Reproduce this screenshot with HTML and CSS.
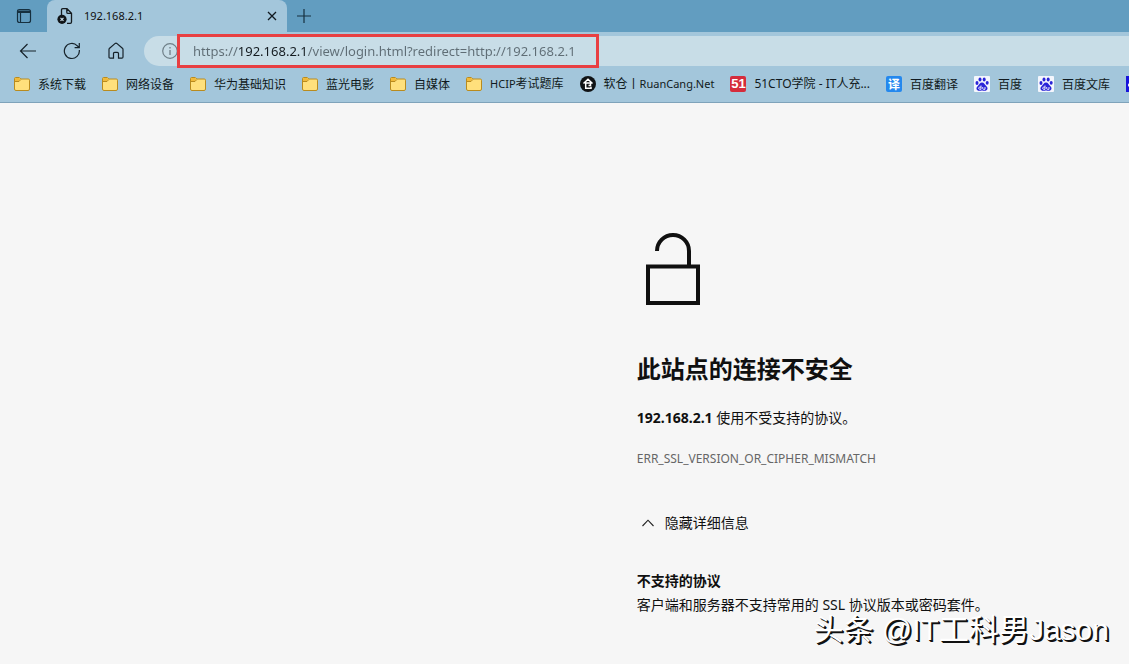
FILE: index.html
```html
<!DOCTYPE html>
<html lang="zh-CN">
<head>
<meta charset="utf-8">
<meta name="viewport" content="width=device-width, initial-scale=1">
<title>192.168.2.1</title>
<link rel="stylesheet" href="styles.css">
</head>
<body>
<svg class="defs" aria-hidden="true">
  <symbol id="folder" viewBox="0 0 16 16">
    <path d="M.5 13V2.700Q.5 1.500 1.700 1.500H5.300L6.800 3H14.300Q15.500 3 15.500 4.200V13Q15.500 14.500 14 14.500H2Q.5 14.500.5 13Z" fill="#ffe07c" stroke="#b98b1e"/>
    <path d="M1 2.500Q1 2 1.700 2H5.200L6.500 3.300 5 5H1Z" fill="#f0b93a"/>
    <path d="M1 5.500H5L6.800 3.500" fill="none" stroke="#b98b1e"/>
  </symbol>
  <symbol id="paw" viewBox="0 0 16 16">
    <rect width="16" height="16" rx="1" fill="#f4f6fd"/>
    <g fill="#2a24d8">
      <ellipse cx="3" cy="7" rx="1.500" ry="1.900"/>
      <ellipse cx="6" cy="3.600" rx="1.500" ry="2"/>
      <ellipse cx="10.200" cy="3.600" rx="1.500" ry="2"/>
      <ellipse cx="13.200" cy="6.800" rx="1.500" ry="1.900"/>
      <path d="M8 6.600C10.200 6.600 10.700 8.600 12 9.700 14.800 12 13.300 14.800 10.900 14.800 9.500 14.800 8.700 14.500 8 14.500S6.500 14.800 5.100 14.800C2.700 14.800 1.200 12 4 9.700 5.300 8.600 5.800 6.600 8 6.600Z"/>
    </g>
    <path d="M7 9.500V13.300H5.700Q4.700 13.300 4.700 12.200T5.700 11.100H7M8.700 11V12.500Q8.700 13.300 9.500 13.300H11V11" fill="none" stroke="#fff" stroke-width=".9"/>
  </symbol>
</svg>
<header class="browser">
  <div class="tabstrip">
    <button class="tab-actions" aria-label="标签页操作">
      <svg class="icon" viewBox="0 0 16 16"><path d="M1.500 4.500V3.500Q1.500 1.500 3.500 1.500H12.500Q14.500 1.500 14.500 3.500V4.500ZM1.500 4V12.500Q1.500 14.500 3.500 14.500H12.500Q14.500 14.500 14.500 12.500V4M4.500 4.500V14.500" fill="none" stroke="#16303f" stroke-width="1.200"/><path d="M2 2.500H14V4.500H2Z" fill="#16303f"/></svg>
    </button>
    <div class="tab">
      <svg class="icon" viewBox="0 0 16 16"><path d="M4.500 7V2Q4.500.7 5.800.7H10L14.500 5.200V14Q14.500 15.300 13.200 15.300H10M9.800 1V4.200Q9.800 5.400 11 5.400H14.200" fill="none" stroke="#151b1f" stroke-width="1.300"/><circle cx="5" cy="11.300" r="4.600" fill="#101417"/><path d="M3.500 9.800 6.500 12.800M6.500 9.800 3.500 12.800" stroke="#c6dae5" stroke-width="1.200"/></svg>
      <span class="tab-title">192.168.2.1</span>
      <button class="close" aria-label="关闭标签页"><svg viewBox="0 0 10 10"><path d="M1 1 9 9M9 1 1 9" stroke="#111a20" stroke-width="1.300"/></svg></button>
    </div>
    <button class="new-tab" aria-label="新建标签页"><svg viewBox="0 0 14 14"><path d="M7 0V14M0 7H14" stroke="#16303f" stroke-width="1.200"/></svg></button>
  </div>
  <div class="toolbar">
    <button class="nav" aria-label="返回"><svg viewBox="0 0 18 18"><path d="M17 9H1.800M8.500 2 1.500 9 8.500 16" fill="none" stroke="#16222a" stroke-width="1.200"/></svg></button>
    <button class="nav" aria-label="刷新"><svg viewBox="0 0 18 18"><path d="M16.300 8A7.500 7.500 0 1 1 14.300 3.800L16.200 5.600M16.300 1V5.700H11.600" fill="none" stroke="#16222a" stroke-width="1.200"/></svg></button>
    <button class="nav" aria-label="主页"><svg viewBox="0 0 18 18"><path d="M2 7.500Q2 6.800 2.600 6.200L8.200 1.400Q9 .8 9.800 1.400L15.400 6.200Q16 6.800 16 7.500V15Q16 16.200 14.900 16.200H11.500V11.500Q11.500 10.300 10.300 10.300H7.700Q6.500 10.300 6.500 11.500V16.200H3.100Q2 16.200 2 15Z" fill="none" stroke="#16222a" stroke-width="1.200"/></svg></button>
    <div class="address">
      <svg class="info" viewBox="0 0 16 16"><circle cx="8" cy="8" r="7.300" fill="none" stroke="#6f7f88" stroke-width="1.200"/><path d="M8 7V12M8 4V5.500" stroke="#6f7f88" stroke-width="1.300"/></svg>
      <div class="highlight"><input class="url" type="text" aria-label="地址栏" value="https://192.168.2.1/view/login.html?redirect=http://192.168.2.1"></div>
    </div>
  </div>
  <nav class="bookmarks" aria-label="收藏夹栏">
    <a href="#"><svg class="icon"><use href="#folder"/></svg>系统下载</a>
    <a href="#"><svg class="icon"><use href="#folder"/></svg>网络设备</a>
    <a href="#"><svg class="icon"><use href="#folder"/></svg>华为基础知识</a>
    <a href="#"><svg class="icon"><use href="#folder"/></svg>蓝光电影</a>
    <a href="#"><svg class="icon"><use href="#folder"/></svg>自媒体</a>
    <a href="#"><svg class="icon"><use href="#folder"/></svg><span><span class="latin">HCIP</span>考试题库</span></a>
    <a href="#"><svg class="icon" viewBox="0 0 16 16"><circle cx="8" cy="8" r="8" fill="#101315"/><path d="M3.500 7.500 8 3.200 12.500 7.500M5.500 7H10.500V9.600H8.500M5.700 7V12.300H11V10.800" fill="none" stroke="#fff" stroke-width="1.500"/></svg><span>软仓丨<span class="latin">RuanCang.Net</span></span></a>
    <a href="#"><span class="badge red">51</span><span><span class="latin-wide">51CTO</span>学院<span class="latin-wide"> - IT</span>人充<span class="latin-wide">...</span></span></a>
    <a href="#"><span class="badge blue">译</span>百度翻译</a>
    <a href="#"><svg class="icon"><use href="#paw"/></svg>百度</a>
    <a href="#"><svg class="icon"><use href="#paw"/></svg>百度文库</a>
    <a href="#" aria-label="更多收藏"><svg class="icon" viewBox="0 0 16 16"><rect width="16" height="16" fill="#1714dc"/><circle cx="4" cy="9" r="2" fill="#fff"/></svg></a>
  </nav>
</header>
<main class="page">
  <svg class="lock" viewBox="0 0 54 72" aria-hidden="true"><path d="M2 33.500H52V70H2ZM43 33V18A16 16 0 0 0 11 18" fill="none" stroke="#101010" stroke-width="4"/></svg>
  <h1>此站点的连接不安全</h1>
  <p class="summary"><strong>192.168.2.1</strong> 使用不受支持的协议。</p>
  <p class="code">ERR_SSL_VERSION_OR_CIPHER_MISMATCH</p>
  <button class="toggle" aria-expanded="true" aria-controls="details"><svg viewBox="0 0 12 8"><path d="M.5 7 6 1.200 11.500 7" fill="none" stroke="#222" stroke-width="1.100"/></svg>隐藏详细信息</button>
  <section id="details" class="details">
    <h2>不支持的协议</h2>
    <p>客户端和服务器不支持常用的 SSL 协议版本或密码套件。</p>
  </section>
</main>
<div class="watermark">头条 @IT工科男Jason</div>
</body>
</html>
```
FILE: styles.css
```css
* { box-sizing: border-box; }

body {
  margin: 0;
  min-height: 100vh;
  overflow: hidden;
  background: #f6f6f6;
  color: #101010;
  font-family: "Noto Sans", "Noto Sans CJK SC", sans-serif;
  font-size: 14px;
}

button {
  display: flex;
  align-items: center;
  padding: 0;
  border: 0;
  background: none;
  color: inherit;
  font: inherit;
}

.defs { position: absolute; width: 0; height: 0; }

.icon { width: 16px; height: 16px; flex: none; }

.browser {
  background: #a3c6db;
  border-bottom: 1px solid #7fa3ba;
}

.tabstrip {
  display: flex;
  height: 32px;
  background: #629dc0;
}

.tab-actions {
  width: 47px;
  justify-content: center;
  border-radius: 0 0 6px 0;
}

.tab {
  display: flex;
  align-items: center;
  width: 240px;
  padding: 0 10px;
  gap: 11px;
  border-radius: 8px 8px 0 0;
  background: #a3c6db;
  font-size: 11px;
}

.tab-title { flex: 1; padding-bottom: 2px; }

.close svg { width: 10px; height: 10px; }

.new-tab { padding: 0 10px; }
.new-tab svg { width: 14px; height: 14px; }

.toolbar {
  display: flex;
  align-items: center;
  height: 38px;
  padding-left: 6px;
}

.nav { width: 44px; justify-content: center; }
.nav svg { width: 18px; height: 18px; }

.address {
  display: flex;
  align-items: center;
  flex: 1;
  height: 30px;
  margin-left: 6px;
  padding-left: 18px;
  border-radius: 15px 0 0 15px;
  background: #c8dde7;
}

.info { width: 16px; height: 16px; flex: none; }

.highlight {
  width: 422px;
  height: 34px;
  margin: 0 0 1px -1px;
  border: 3px solid #e83f42;
}

.url {
  width: 100%;
  height: 28px;
  padding: 0 0 0 13px;
  border: 0;
  outline: 0;
  background: linear-gradient(90deg, #5f6d75 58px, #141b20 58px, #141b20 128px, #5f6d75 128px);
  background-clip: text;
  color: transparent;
  font-family: "Noto Sans", sans-serif;
  font-size: 13px;
}

.bookmarks {
  display: flex;
  gap: 16px;
  height: 32px;
  padding: 0 0 5px 14px;
  overflow: hidden;
  font-size: 12px;
  line-height: 16px;
}

.bookmarks a {
  display: flex;
  align-items: center;
  flex: none;
  gap: 8px;
  color: #111a20;
  font-family: "Noto Sans CJK SC", sans-serif;
  text-decoration: none;
}

.latin { font-family: "Noto Sans", sans-serif; font-size: 11px; }
.latin-wide { font-family: "Noto Sans", sans-serif; }

.badge {
  width: 16px;
  height: 16px;
  border-radius: 2px;
  color: #fff;
  font-weight: 700;
  line-height: 16px;
  text-align: center;
}

.red { background: #d52c3c; font-family: "Liberation Sans", sans-serif; font-size: 13px; }
.blue { background: #2488ee; font-size: 12px; }

.page { padding: 130px 16px 0 56.4%; }

.lock {
  display: block;
  width: 54px;
  height: 72px;
  margin-left: 9px;
}

h1 {
  margin: 47px 0 0;
  font-family: "Noto Sans CJK SC", sans-serif;
  font-size: 24px;
  font-weight: 700;
  line-height: 32px;
}

.summary { margin: 24px 0 0; line-height: 20px; }

.code {
  margin: 21px 0 0;
  color: #666;
  font-size: 12px;
  line-height: 20px;
}

.toggle {
  gap: 11px;
  margin-top: 44px;
  padding-left: 5px;
  line-height: 20px;
}

.toggle svg { width: 12px; height: 8px; }

.details { margin-top: 36px; line-height: 24px; }
.details h2 { margin: 0; font-size: 14px; font-weight: 700; }
.details p { margin: 0; white-space: nowrap; }

.watermark {
  position: absolute;
  right: 20px;
  bottom: 14px;
  color: #fff;
  font-family: "Liberation Sans", "Noto Sans CJK SC", sans-serif;
  font-size: 30px;
  line-height: 40px;
  text-shadow: 1px 1px 0 #111, 2px 2px 0 #111;
  white-space: nowrap;
}
```
